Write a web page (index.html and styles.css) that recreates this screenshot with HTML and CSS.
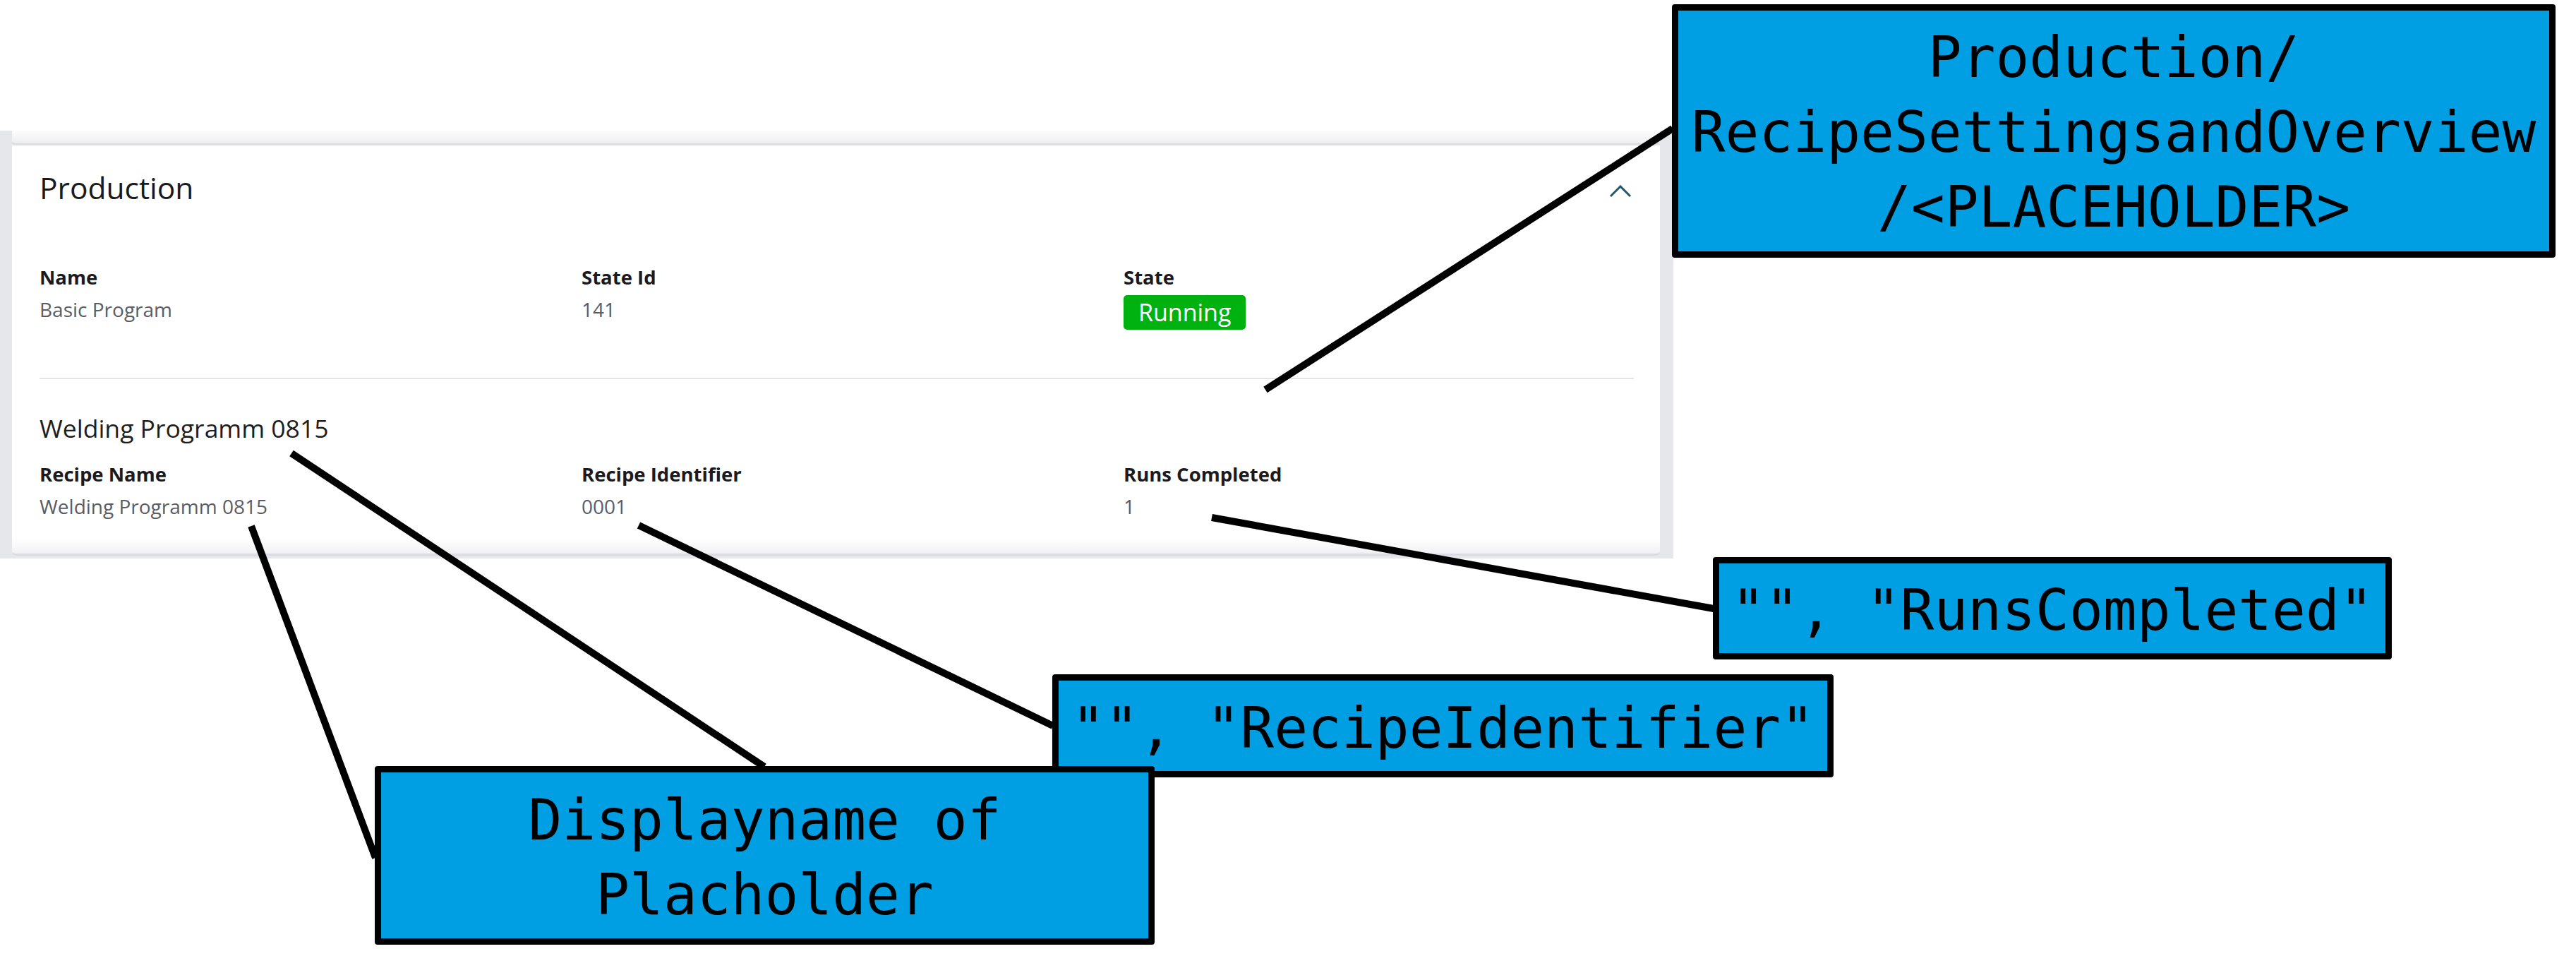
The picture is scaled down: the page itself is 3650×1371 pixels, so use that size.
FILE: index.html
```html
<!DOCTYPE html>
<html>
<head>
  <title>Production - Recipe Overview</title>
  <link rel="stylesheet" href="styles.css">
</head>
<body>
  <div class="page">
    <div class="panel">
      <div class="card-tail"></div>
      <section class="card">
        <header class="card-head">
          <h2 class="card-title">Production</h2>
          <svg class="chevron" width="32" height="18" viewBox="0 0 32 18">
            <polyline points="2,16 16,2 30,16" fill="none" stroke="#24566b" stroke-width="3"/>
          </svg>
        </header>

        <div class="fields">
          <div class="field">
            <div class="label">Name</div>
            <div class="value">Basic Program</div>
          </div>
          <div class="field">
            <div class="label">State Id</div>
            <div class="value">141</div>
          </div>
          <div class="field">
            <div class="label">State</div>
            <div class="value"><span class="badge">Running</span></div>
          </div>
        </div>

        <div class="divider"></div>

        <h3 class="sub-title">Welding Programm 0815</h3>
        <div class="fields fields-recipe">
          <div class="field">
            <div class="label">Recipe Name</div>
            <div class="value">Welding Programm 0815</div>
          </div>
          <div class="field">
            <div class="label">Recipe Identifier</div>
            <div class="value">0001</div>
          </div>
          <div class="field">
            <div class="label">Runs Completed</div>
            <div class="value">1</div>
          </div>
        </div>
      </section>
    </div>
  </div>

  <div class="notes">
    <svg class="note-lines" width="3650" height="1371" viewBox="0 0 3650 1371">
      <g stroke="#000" stroke-width="10" fill="none">
        <line x1="1793" y1="552" x2="2370" y2="182"/>
        <line x1="1717" y1="733" x2="2428" y2="862"/>
        <line x1="905" y1="744" x2="1492" y2="1028"/>
        <line x1="413" y1="642" x2="1083" y2="1086"/>
        <line x1="356" y1="745" x2="532" y2="1215"/>
      </g>
    </svg>
    <div class="note note-path">Production/<br>RecipeSettingsandOverview<br>/&lt;PLACEHOLDER&gt;</div>
    <div class="note note-runs">"", "RunsCompleted"</div>
    <div class="note note-ident">"", "RecipeIdentifier"</div>
    <div class="note note-display">Displayname of Placholder</div>
  </div>
</body>
</html>
```

FILE: styles.css
```css
body {
  margin: 0;
  background-color: #ffffff;
  font-family: "Open Sans", "Noto Sans", sans-serif;
}

.page {
  padding-top: 185px;
  width: 2371px;
}

.panel {
  background-color: #e6e7ea;
  padding: 0 19px 4px 17px;
}

.card-tail {
  height: 18px;
  background: linear-gradient(#fcfcfc, #eeeef0);
  border-bottom: 3px solid #dadde1;
  border-radius: 0 0 6px 6px;
}

.card {
  background: linear-gradient(#ffffff calc(100% - 22px), #f1f1f3 100%);
  border-bottom: 3px solid #d9dce0;
  border-radius: 0 0 6px 6px;
  padding: 32px 37px 47px 39px;
}

.card-head {
  display: flex;
  justify-content: space-between;
  align-items: center;
}

.card-title {
  margin: 0;
  font-size: 42.5px;
  line-height: 56px;
  font-weight: 400;
  color: #1a1a1a;
}

.chevron {
  margin-top: 10px;
  margin-right: 3px;
}

.fields {
  display: grid;
  grid-template-columns: repeat(3, 1fr);
  column-gap: 45px;
  margin-top: 79px;
}

.fields-recipe {
  margin-top: 23px;
}

.label {
  font-size: 27.5px;
  line-height: 40px;
  font-weight: 700;
  color: #1a1a1f;
}

.value {
  margin-top: 5px;
  font-size: 28px;
  line-height: 40px;
  color: #5a5d63;
}

.badge {
  display: block;
  width: max-content;
  height: 49px;
  padding: 0 21px;
  background-color: #00b20f;
  border-radius: 5px;
  color: #ffffff;
  font-size: 34px;
  line-height: 49px;
}

.divider {
  height: 2px;
  margin-top: 68px;
  background-color: #e2e4e8;
}

.sub-title {
  margin: 46px 0 0;
  font-size: 35.5px;
  line-height: 46px;
  font-weight: 400;
  color: #1e1e1e;
}

/* annotation overlay */
.notes {
  position: absolute;
  top: 0;
  left: 0;
  width: 3650px;
  height: 1371px;
  pointer-events: none;
}

.note-lines {
  position: absolute;
  top: 0;
  left: 0;
}

.note {
  position: absolute;
  box-sizing: border-box;
  display: flex;
  align-items: center;
  justify-content: center;
  padding-top: 7px;
  border: 9px solid #000000;
  border-radius: 4px;
  background-color: #009fe3;
  color: #000000;
  font-family: "DejaVu Sans Mono", "Liberation Mono", monospace;
  font-size: 79.5px;
  line-height: 106px;
  text-align: center;
  white-space: pre-wrap;
}

.note-path {
  left: 2369px;
  top: 6px;
  width: 1252px;
  height: 359px;
  padding-top: 4px;
}

.note-runs {
  left: 2427px;
  top: 789px;
  width: 962px;
  height: 145px;
}

.note-ident {
  left: 1491px;
  top: 955px;
  width: 1107px;
  height: 146px;
}

.note-display {
  left: 531px;
  top: 1085px;
  width: 1105px;
  height: 253px;
}
```
